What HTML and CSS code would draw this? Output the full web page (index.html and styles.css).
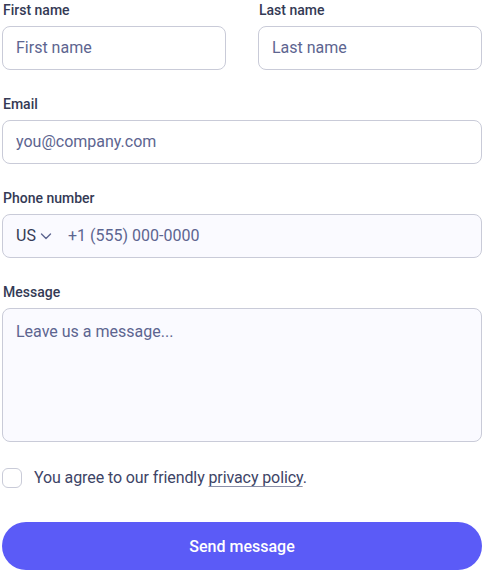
FILE: index.html
```html
<!DOCTYPE html>
<html>
<head>
<meta charset="utf-8">
<link rel="stylesheet" href="styles.css">
</head>
<body>
<form class="form">
  <div class="row two">
    <div class="field">
      <label class="label">First name</label>
      <input class="input" placeholder="First name">
    </div>
    <div class="field">
      <label class="label">Last name</label>
      <input class="input" placeholder="Last name">
    </div>
  </div>
  <div class="field">
    <label class="label">Email</label>
    <input class="input" placeholder="you@company.com">
  </div>
  <div class="field">
    <label class="label">Phone number</label>
    <div class="phone">
      <span class="country">US
        <svg class="chev" width="14" height="14" viewBox="0 0 14 14"><path d="M2.5 5l4.5 4.5 4.5-4.5" fill="none" stroke="#5d6590" stroke-width="1.4" stroke-linecap="round" stroke-linejoin="round"/></svg>
      </span>
      <input class="phone-input" placeholder="+1 (555) 000-0000">
    </div>
  </div>
  <div class="field">
    <label class="label">Message</label>
    <textarea class="textarea" placeholder="Leave us a message..."></textarea>
  </div>
  <label class="agree">
    <span class="box"></span>
    <span>You agree to our friendly <a class="link" href="#">privacy policy</a>.</span>
  </label>
  <button type="button" class="btn">Send message</button>
</form>
</body>
</html>
```
FILE: styles.css
```css
* { box-sizing: border-box; }
html, body { margin: 0; padding: 0; background: #fff; }
body { padding: 0 2px; font-family: Roboto, "Liberation Sans", sans-serif; }
.form { display: flex; flex-direction: column; gap: 24px; width: 480px; }
.row.two { display: grid; grid-template-columns: minmax(0, 1fr) minmax(0, 1fr); column-gap: 32px; }
.field { display: flex; flex-direction: column; gap: 6px; min-width: 0; }
.label { font-size: 14px; line-height: 20px; font-weight: 500; color: #343a55; padding-left: 1px; }
.input, .phone, .textarea {
  width: 100%; min-width: 0;
  height: 44px; border: 1px solid #c9cbd8; border-radius: 8px;
  font-family: inherit; font-size: 16px; color: #343a55; background: #fff;
  padding: 0 13px; outline: none;
}
.input { padding-bottom: 2px; }
.input::placeholder, .phone-input::placeholder, .textarea::placeholder { color: #5d6590; opacity: 1; }
.phone { display: flex; align-items: center; background: #fafaff; padding: 0 13px 1px; }
.country { display: flex; align-items: center; gap: 3px; font-size: 16px; color: #343a55; width: 52px; }
.chev { margin-top: 1px; }
.phone-input { border: 0; outline: none; background: transparent; font-family: inherit; font-size: 16px; flex: 1; padding: 0; min-width: 0; }
.textarea { height: 134px; resize: none; background: #fafaff; padding: 11px 13px; line-height: 24px; }
.agree { display: flex; align-items: center; gap: 12px; font-size: 16px; line-height: 24px; color: #3d4466; letter-spacing: -0.1px; }
.box { width: 20px; height: 20px; border: 1px solid #c9cbd8; border-radius: 6px; background: #fff; flex: none; }
.link { color: #3d4466; text-decoration: underline; text-underline-offset: 3px; text-decoration-color: #8a8fa8; }
.btn {
  margin-top: 8px; height: 48px; border: 0; border-radius: 24px; background: #5b5bf7;
  color: #fff; font-family: inherit; font-size: 16px; font-weight: 500; cursor: pointer;
}
```
